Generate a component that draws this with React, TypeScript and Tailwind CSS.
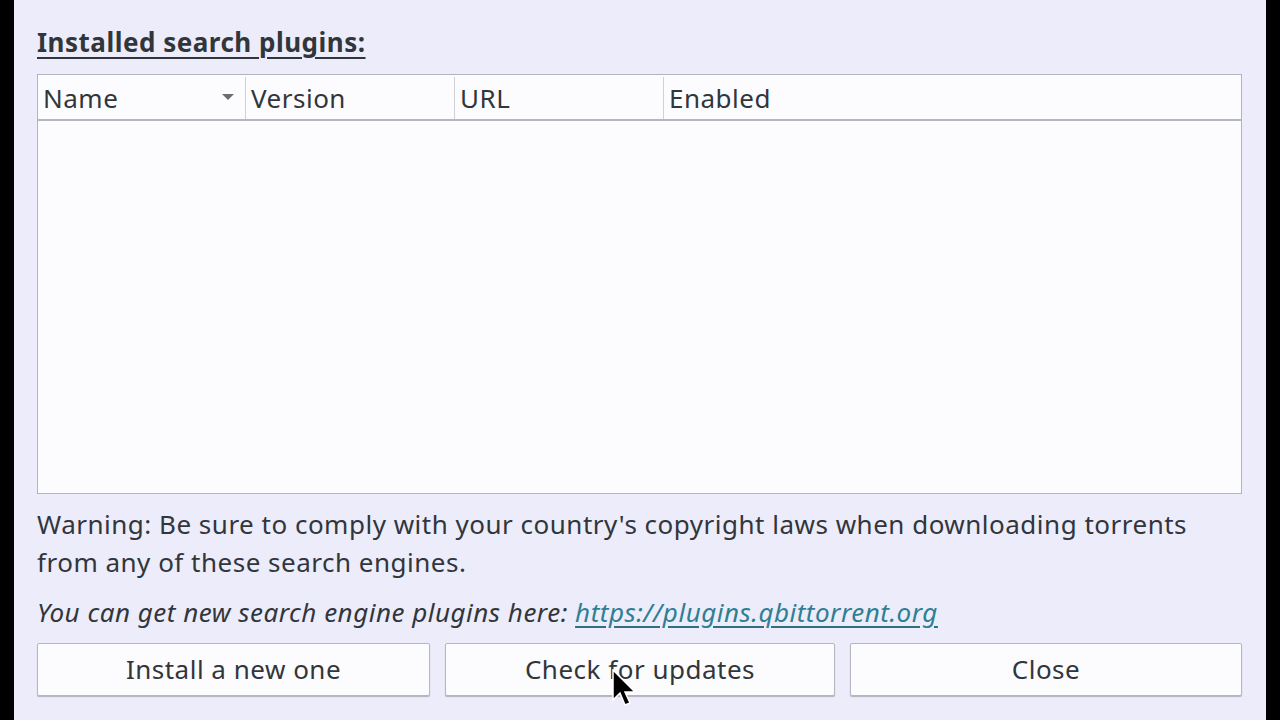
import React from "react";

export default function App() {
  const font = { fontFamily: '"Noto Sans", "Open Sans", sans-serif' };
  return (
    <div className="flex h-[720px] w-[1280px] bg-black" style={font}>
      <div className="ml-[14px] mr-[14px] flex flex-1 flex-col bg-[#ececfb] pl-[23px] pr-[23px] text-[#31363b]">
        <div className="pt-[24px] text-[26px] font-bold leading-[36px] tracking-[0.5px] underline decoration-2 underline-offset-[5px]">
          Installed search plugins:
        </div>
        <div className="mt-[14px] flex h-[420px] w-[1205px] flex-col border border-[#b4b4bc] bg-[#fcfcff]">
          <div className="flex h-[46px] border-b-2 border-[#b6b6c0] pt-[2px] text-[26px] leading-[44px] tracking-[0.5px]">
            <div className="relative flex w-[208px] items-center border-r border-[#d0d0d8] pl-[5px]">
              <span>Name</span>
              <svg className="absolute right-[10px] top-[16px]" width="14" height="8" viewBox="0 0 14 8">
                <path d="M1 1 L13 1 L7 7 Z" fill="#6a6e74" />
              </svg>
            </div>
            <div className="flex w-[209px] items-center border-r border-[#d0d0d8] pl-[5px]">Version</div>
            <div className="flex w-[209px] items-center border-r border-[#d0d0d8] pl-[5px]">URL</div>
            <div className="flex flex-1 items-center pl-[5px]">Enabled</div>
          </div>
          <div className="flex-1" />
        </div>
        <div className="mt-[11px] text-[26px] leading-[38px] tracking-[0.5px]">
          Warning: Be sure to comply with your country's copyright laws when downloading torrents from any of these search engines.
        </div>
        <div className="mt-[13px] text-[26px] italic leading-[36px] tracking-[0.5px]">
          You can get new search engine plugins here:{" "}
          <span className="text-[#2f7f94] underline decoration-[#2f6f80] underline-offset-[4px]">
            https://plugins.qbittorrent.org
          </span>
        </div>
        <div className="mt-[13px] flex gap-[15px]">
          <button className="h-[53px] w-[393px] rounded-[2px] border border-[#8fc8d0] bg-[#fcfcff] text-[26px] tracking-[0.5px] text-[#31363b] shadow-[0_1px_1px_rgba(0,0,0,0.25)]">
            Install a new one
          </button>
          <button className="relative h-[53px] w-[390px] rounded-[2px] border border-[#b6b6c0] bg-[#fcfcff] text-[26px] tracking-[0.5px] text-[#31363b] shadow-[0_1px_1px_rgba(0,0,0,0.25)]">
            Check for updates
            <svg className="absolute left-[166px] top-[25px]" width="26" height="40" viewBox="0 0 26 40">
              <path d="M1 1 L1 31 L8 24 L13 36 L18 34 L13 23 L23 23 Z" fill="#000" stroke="#fff" strokeWidth="1.5" />
            </svg>
          </button>
          <button className="h-[53px] w-[392px] rounded-[2px] border border-[#b6b6c0] bg-[#fcfcff] text-[26px] tracking-[0.5px] text-[#31363b] shadow-[0_1px_1px_rgba(0,0,0,0.25)]">
            Close
          </button>
        </div>
      </div>
    </div>
  );
}
